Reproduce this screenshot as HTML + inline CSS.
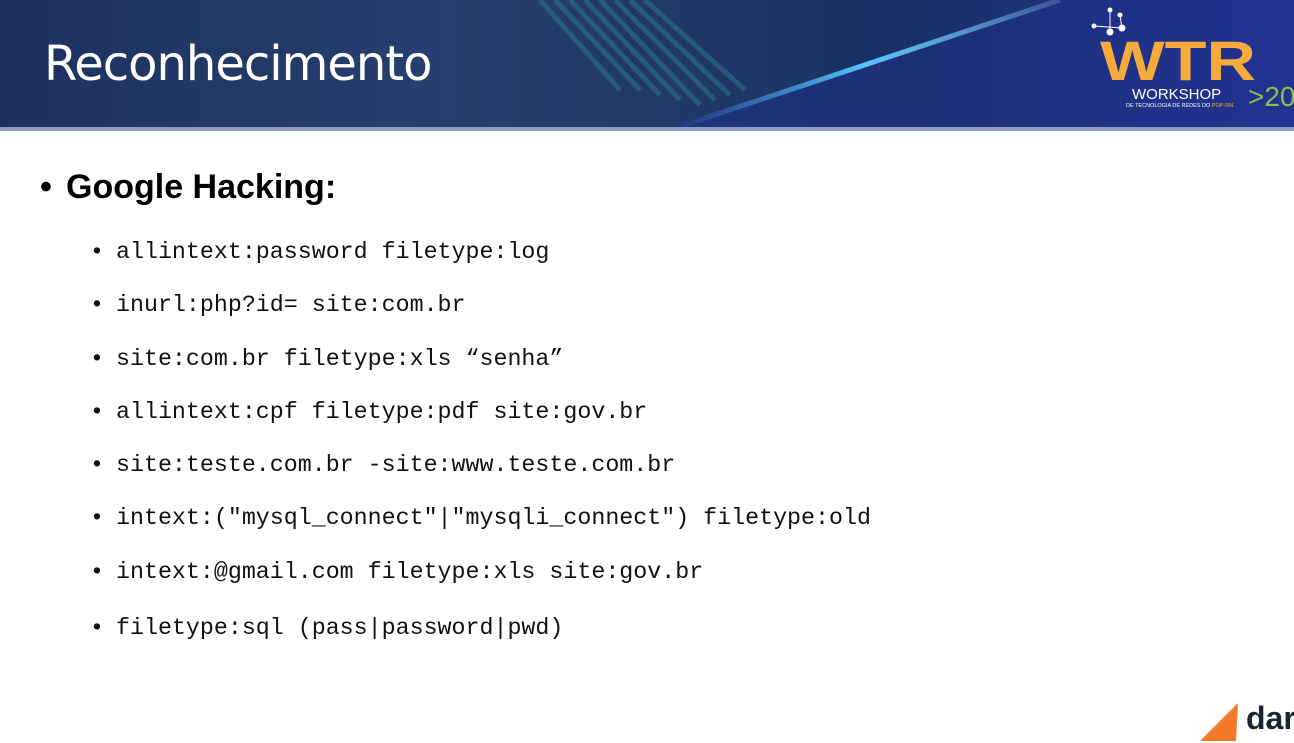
<!DOCTYPE html>
<html><head><meta charset="utf-8"><style>
body{margin:0;width:1294px;height:741px;overflow:hidden;background:#fff;position:relative;font-family:"Liberation Sans",sans-serif}
.hdr{position:absolute;left:0;top:0;width:1294px;height:130px;background:linear-gradient(90deg,#1d3160 0%,#27406f 35%,#203a68 50%,#1a2f66 70%,#22349a 100%);overflow:hidden}
.bar{position:absolute;left:0;top:127px;width:1294px;height:4px;background:#8d9cc0}
.title{position:absolute;left:44px;top:36px;color:#fff;font-size:48px;font-family:"DejaVu Sans","Liberation Sans",sans-serif;letter-spacing:-1px}
.h2{position:absolute;left:40px;top:168px;width:400px;font-size:34px;font-weight:bold;color:#000;white-space:nowrap}
.h2 b{position:absolute;left:26px;top:0;white-space:nowrap}
.l{position:absolute;left:116px;font-family:"Liberation Mono",monospace;font-size:23.3px;color:#111;white-space:pre}
.l:before{content:"•";position:absolute;left:-26px}
</style></head><body>
<div class="hdr">
<svg width="1294" height="130" style="position:absolute;left:0;top:0">
<defs><linearGradient id="g" x1="0" x2="1"><stop offset="0" stop-color="#4fb3ff" stop-opacity="0"/><stop offset=".5" stop-color="#56c6ff"/><stop offset="1" stop-color="#9ee6ff" stop-opacity=".2"/></linearGradient></defs>
<g stroke="#2f7a8a" stroke-width="5" opacity=".5">
<line x1="540" y1="0" x2="620" y2="90"/><line x1="555" y1="0" x2="640" y2="90"/><line x1="570" y1="0" x2="660" y2="95"/><line x1="585" y1="0" x2="680" y2="100"/><line x1="600" y1="0" x2="700" y2="105"/><line x1="615" y1="0" x2="715" y2="100"/><line x1="630" y1="0" x2="730" y2="95"/><line x1="645" y1="0" x2="745" y2="90"/></g>
<polygon points="660,130 1060,0 1294,0 1294,130" fill="#1f2f8a" opacity=".5"/>
<line x1="675" y1="128" x2="1060" y2="0" stroke="url(#g)" stroke-width="5"/>
<g fill="#fff" stroke="#fff"><circle cx="1110" cy="10" r="2"/><circle cx="1120" cy="15" r="2"/><circle cx="1094" cy="26" r="2"/><circle cx="1122" cy="28" r="3"/><circle cx="1110" cy="32" r="3"/><line x1="1110" y1="10" x2="1110" y2="32" stroke-width="1"/><line x1="1094" y1="26" x2="1122" y2="28" stroke-width="1"/><line x1="1120" y1="15" x2="1122" y2="28" stroke-width="1"/></g>
<text x="1100" y="80" fill="#f6ab3c" font-family="Liberation Sans" font-weight="bold" font-size="56" textLength="156" lengthAdjust="spacingAndGlyphs">WTR</text>
<text x="1132" y="99" fill="#fff" font-family="Liberation Sans" font-size="15">WORKSHOP</text>
<text x="1126" y="107" fill="#fff" font-family="Liberation Sans" font-size="5.5">DE TECNOLOGIA DE REDES DO <tspan fill="#f6ab3c">POP-RN</tspan></text>
<text x="1248" y="106" fill="#8ac04a" font-family="Liberation Sans" font-size="28">&gt;202</text>
</svg>
<div class="title">Reconhecimento</div>
</div>
<div class="bar"></div>
<div class="h2">•<b>Google Hacking:</b></div>
<div class="l" style="top:239px">allintext:password filetype:log</div>
<div class="l" style="top:292px">inurl:php?id= site:com.br</div>
<div class="l" style="top:346px">site:com.br filetype:xls “senha”</div>
<div class="l" style="top:399px">allintext:cpf filetype:pdf site:gov.br</div>
<div class="l" style="top:452px">site:teste.com.br -site:www.teste.com.br</div>
<div class="l" style="top:505px">intext:("mysql_connect"|"mysqli_connect") filetype:old</div>
<div class="l" style="top:559px">intext:@gmail.com filetype:xls site:gov.br</div>
<div class="l" style="top:615px">filetype:sql (pass|password|pwd)</div>
<svg width="60" height="40" style="position:absolute;left:1200px;top:703px"><polygon points="0,38 38,0 36,38" fill="#f47a2a"/></svg>
<div style="position:absolute;left:1246px;top:700px;font-size:32px;font-weight:bold;color:#1d2430">dar</div>
</body></html>
